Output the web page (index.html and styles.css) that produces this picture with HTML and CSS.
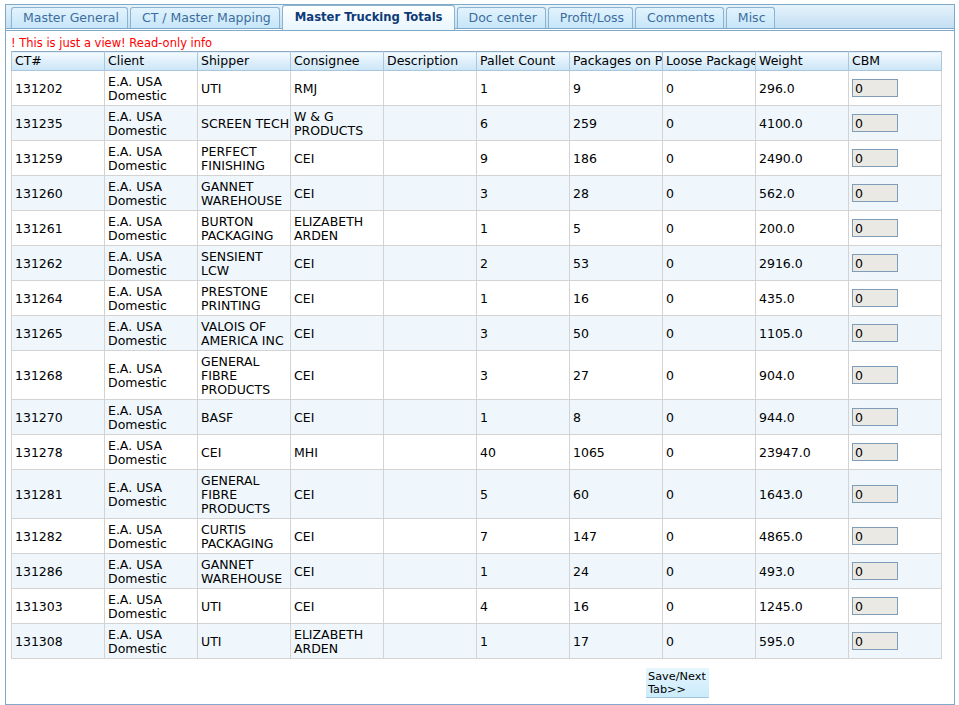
FILE: index.html
```html
<!DOCTYPE html>
<html>
<head>
<meta charset="utf-8">
<link rel="stylesheet" href="styles.css">
</head>
<body>
<div class="panel">
  <div class="tabbar">
    <div class="tab">Master General</div>
    <div class="tab">CT / Master Mapping</div>
    <div class="tab active">Master Trucking Totals</div>
    <div class="tab">Doc center</div>
    <div class="tab">Profit/Loss</div>
    <div class="tab">Comments</div>
    <div class="tab">Misc</div>
  </div>
  <div class="content">
    <div class="notice">! This is just a view! Read-only info</div>
    <table class="grid">
      <colgroup>
        <col class="c"><col class="c"><col class="c"><col class="c"><col class="c">
        <col class="c"><col class="c"><col class="c"><col class="c"><col class="c">
      </colgroup>
      <thead>
        <tr><th>CT#</th><th>Client</th><th>Shipper</th><th>Consignee</th><th>Description</th><th>Pallet Count</th><th>Packages on Pallets</th><th>Loose Packages</th><th>Weight</th><th>CBM</th></tr>
      </thead>
      <tbody>
        <tr><td>131202</td><td>E.A. USA Domestic</td><td>UTI</td><td>RMJ</td><td></td><td>1</td><td>9</td><td>0</td><td>296.0</td><td><input class="cbm" value="0" readonly></td></tr>
        <tr><td>131235</td><td>E.A. USA Domestic</td><td class="nw">SCREEN TECH</td><td>W &amp; G PRODUCTS</td><td></td><td>6</td><td>259</td><td>0</td><td>4100.0</td><td><input class="cbm" value="0" readonly></td></tr>
        <tr><td>131259</td><td>E.A. USA Domestic</td><td>PERFECT FINISHING</td><td>CEI</td><td></td><td>9</td><td>186</td><td>0</td><td>2490.0</td><td><input class="cbm" value="0" readonly></td></tr>
        <tr><td>131260</td><td>E.A. USA Domestic</td><td>GANNET WAREHOUSE</td><td>CEI</td><td></td><td>3</td><td>28</td><td>0</td><td>562.0</td><td><input class="cbm" value="0" readonly></td></tr>
        <tr><td>131261</td><td>E.A. USA Domestic</td><td>BURTON PACKAGING</td><td>ELIZABETH ARDEN</td><td></td><td>1</td><td>5</td><td>0</td><td>200.0</td><td><input class="cbm" value="0" readonly></td></tr>
        <tr><td>131262</td><td>E.A. USA Domestic</td><td>SENSIENT LCW</td><td>CEI</td><td></td><td>2</td><td>53</td><td>0</td><td>2916.0</td><td><input class="cbm" value="0" readonly></td></tr>
        <tr><td>131264</td><td>E.A. USA Domestic</td><td>PRESTONE PRINTING</td><td>CEI</td><td></td><td>1</td><td>16</td><td>0</td><td>435.0</td><td><input class="cbm" value="0" readonly></td></tr>
        <tr><td>131265</td><td>E.A. USA Domestic</td><td>VALOIS OF AMERICA INC</td><td>CEI</td><td></td><td>3</td><td>50</td><td>0</td><td>1105.0</td><td><input class="cbm" value="0" readonly></td></tr>
        <tr><td>131268</td><td>E.A. USA Domestic</td><td>GENERAL FIBRE PRODUCTS</td><td>CEI</td><td></td><td>3</td><td>27</td><td>0</td><td>904.0</td><td><input class="cbm" value="0" readonly></td></tr>
        <tr><td>131270</td><td>E.A. USA Domestic</td><td>BASF</td><td>CEI</td><td></td><td>1</td><td>8</td><td>0</td><td>944.0</td><td><input class="cbm" value="0" readonly></td></tr>
        <tr><td>131278</td><td>E.A. USA Domestic</td><td>CEI</td><td>MHI</td><td></td><td>40</td><td>1065</td><td>0</td><td>23947.0</td><td><input class="cbm" value="0" readonly></td></tr>
        <tr><td>131281</td><td>E.A. USA Domestic</td><td>GENERAL FIBRE PRODUCTS</td><td>CEI</td><td></td><td>5</td><td>60</td><td>0</td><td>1643.0</td><td><input class="cbm" value="0" readonly></td></tr>
        <tr><td>131282</td><td>E.A. USA Domestic</td><td>CURTIS PACKAGING</td><td>CEI</td><td></td><td>7</td><td>147</td><td>0</td><td>4865.0</td><td><input class="cbm" value="0" readonly></td></tr>
        <tr><td>131286</td><td>E.A. USA Domestic</td><td>GANNET WAREHOUSE</td><td>CEI</td><td></td><td>1</td><td>24</td><td>0</td><td>493.0</td><td><input class="cbm" value="0" readonly></td></tr>
        <tr><td>131303</td><td>E.A. USA Domestic</td><td>UTI</td><td>CEI</td><td></td><td>4</td><td>16</td><td>0</td><td>1245.0</td><td><input class="cbm" value="0" readonly></td></tr>
        <tr><td>131308</td><td>E.A. USA Domestic</td><td>UTI</td><td>ELIZABETH ARDEN</td><td></td><td>1</td><td>17</td><td>0</td><td>595.0</td><td><input class="cbm" value="0" readonly></td></tr>
      </tbody>
    </table>
    <div class="actions">
      <div class="btn">Save/Next Tab&gt;&gt;</div>
    </div>
  </div>
</div>
</body>
</html>
```
FILE: styles.css
```css
html, body {
  margin: 0;
  padding: 0;
  background: #ffffff;
}
body {
  font-family: "DejaVu Sans", Verdana, sans-serif;
  font-size: 12.5px;
  color: #000;
}
.panel {
  box-sizing: border-box;
  margin: 4px 0 0 5px;
  width: 950px;
  height: 701px;
  border: 1px solid #7fa9c9;
  display: flex;
  flex-direction: column;
}
.tabbar {
  box-sizing: border-box;
  height: 24px;
  display: flex;
  align-items: flex-end;
  gap: 2px;
  padding-left: 5px;
  background: linear-gradient(#e6f3fc, #c3dff3);
  border-bottom: 1px solid #7fa9c9;
}
.tab {
  box-sizing: border-box;
  height: 21px;
  padding: 0 8px 0 11px;
  border: 1px solid #8db3d0;
  border-bottom: none;
  border-radius: 3px 3px 0 0;
  background: linear-gradient(#e2f3fd, #c6e6f9);
  color: #3d6d9e;
  line-height: 20px;
  white-space: nowrap;
}
.tab.active {
  height: 25px;
  margin-bottom: -2px;
  padding: 0 11px 0 12px;
  background: linear-gradient(#ffffff, #e8f6fd);
  color: #0f3a78;
  font-weight: bold;
  font-size: 11.6px;
  line-height: 22px;
}
.content {
  flex: 1;
  margin-top: 1px;
  border-top: 1px solid #7fa9c9;
  padding: 5px 0 0 5px;
}
.notice {
  color: #ff0000;
  font-size: 11.5px;
  line-height: 14px;
  margin-bottom: 1px;
}
.grid {
  border-collapse: collapse;
  table-layout: fixed;
  width: 931px;
  border: 1px solid #8eaac3;
}
.grid col.c {
  width: 93px;
}
.grid th {
  box-sizing: border-box;
  height: 19px;
  padding: 2px 0 2px 3px;
  text-align: left;
  font-weight: normal;
  line-height: 14px;
  white-space: nowrap;
  overflow: hidden;
  text-overflow: clip;
  background: linear-gradient(#f3faff, #cbe5f7);
  border: 1px solid #a9c6dc;
  border-top: none;
}
.grid td {
  padding: 4px 0 2px 3px;
  line-height: 14px;
  border: 1px solid #d3d3d3;
  vertical-align: middle;
  height: 28px;
}
.grid tbody tr:nth-child(even) td {
  background: #eff7fd;
}
.grid td.nw {
  white-space: nowrap;
}
.cbm {
  display: block;
  box-sizing: border-box;
  width: 46px;
  height: 18px;
  margin: -2px 0 0 0;
  padding: 0 2px;
  border: 1px solid #7f9db9;
  background: #ebe9e4;
  font-family: "DejaVu Sans", Verdana, sans-serif;
  font-size: 12.5px;
  color: #000;
  outline: none;
}
.actions {
  display: flex;
  padding: 9px 0 0 635px;
}
.btn {
  box-sizing: border-box;
  width: 63px;
  height: 30px;
  padding: 2px 1px 1px 2px;
  font-size: 11.3px;
  line-height: 13px;
  background: linear-gradient(#e6f6fe, #cbebfb);
  border-bottom: 1px solid #9ec6de;
  color: #000;
}
```
